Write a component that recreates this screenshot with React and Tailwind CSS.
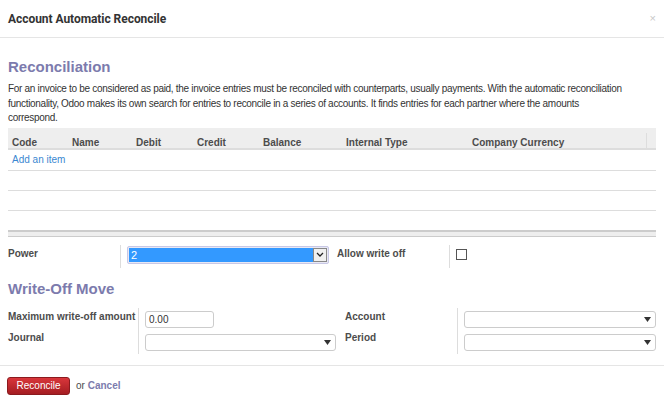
import React from "react";

const Caret = () => (
  <svg width="7" height="5" viewBox="0 0 7 5" className="shrink-0"><path d="M0 0h7L3.5 5z" fill="#333" /></svg>
);

const Sel = ({ className }) => (
  <div className={"h-[17px] border border-[#cccccc] rounded-[3px] bg-white flex items-center justify-end pr-[4px] " + className}>
    <Caret />
  </div>
);

export default function App() {
  return (
    <div className="w-[664px] h-[401px] bg-white font-['Liberation_Sans',Arial,sans-serif] text-[#4c4c4c] text-[11px] overflow-hidden">
      {/* header */}
      <div className="h-[38px] border-b border-[#e5e5e5] flex items-center justify-between pl-[8px] pr-[8px]">
        <div className="font-['Roboto',sans-serif] font-bold text-[12px] text-[#333] tracking-[-0.05px]">Account Automatic Reconcile</div>
        <div className="text-[#c8c8c8] text-[11px]">×</div>
      </div>
      <div className="px-[8px]">
        <div className="h-[20px] mt-[19px] flex items-center text-[15px] font-bold text-[#7c7bad]">Reconciliation</div>
        <p className="mt-[5px] text-[10px] leading-[14.5px] tracking-[-0.3px] text-[#333] whitespace-nowrap">
          For an invoice to be considered as paid, the invoice entries must be reconciled with counterparts, usually payments. With the automatic reconciliation<br />
          functionality, Odoo makes its own search for entries to reconcile in a series of accounts. It finds entries for each partner where the amounts<br />
          correspond.
        </p>
        {/* table */}
        <div className="mt-[2px] w-[648px]">
          <div className="h-[22px] bg-[#eeeeee] border-b-2 border-[#dddddd] font-bold text-[#4c4c4c] text-[10px] relative">
            <span className="absolute top-[7px] left-[4px]">Code</span>
            <span className="absolute top-[7px] left-[64px]">Name</span>
            <span className="absolute top-[7px] left-[128px]">Debit</span>
            <span className="absolute top-[7px] left-[189px]">Credit</span>
            <span className="absolute top-[7px] left-[255px]">Balance</span>
            <span className="absolute top-[7px] left-[338px]">Internal Type</span>
            <span className="absolute top-[7px] left-[464px]">Company Currency</span>
            <span className="absolute left-[638px] top-[5px] h-[15px] w-px bg-[#dddddd]" />
          </div>
          <div className="h-[21px] border-b border-[#dddddd] flex items-center pl-[4px] text-[#3a87d1] text-[10px]">Add an item</div>
          <div className="h-[20px] border-b border-[#dddddd]" />
          <div className="h-[20px] border-b border-[#dddddd]" />
          <div className="h-[21px] border-b-2 border-[#cccccc]" />
          <div className="h-[5px] bg-[#eeeeee] border-b border-[#cccccc]" />
        </div>
        {/* power row */}
        <div className="mt-[8px] flex items-start h-[23px]">
          <div className="w-[112px] h-[18px] flex items-center font-bold text-[10px]">Power</div>
          <div className="w-px h-[23px] bg-[#dddddd]" />
          <div className="ml-[6px] w-[202px] h-[18px] mt-[1px] border border-[#c8c8e6] rounded-[2px] bg-[#e8e8f4] p-[1px] flex">
            <div className="flex-1 bg-[#3399ff] text-white text-[11px] leading-[14px] pl-[2px]">2</div>
            <div className="w-[14px] h-[14px] border border-[#888] bg-[#f0f0f0] flex items-center justify-center">
              <svg width="8" height="5" viewBox="0 0 8 5"><path d="M1 1l3 3 3-3" stroke="#222" strokeWidth="1.3" fill="none" /></svg>
            </div>
          </div>
          <div className="ml-[8px] w-[112px] h-[18px] flex items-center font-bold text-[10px]">Allow write off</div>
          <div className="w-px h-[23px] bg-[#dddddd]" />
          <div className="ml-[6px] mt-[4px] w-[11px] h-[11px] border border-[#555] bg-white" />
        </div>
        <div className="mt-[12px] h-[20px] flex items-center text-[15px] font-bold text-[#7c7bad]">Write-Off Move</div>
        {/* write-off grid */}
        <div className="mt-[8px] flex">
          <div className="flex">
            <div className="w-[130px] flex flex-col gap-[3px] font-bold text-[10px] whitespace-nowrap">
              <div className="h-[18px] flex items-center">Maximum write-off amount</div>
              <div className="h-[18px] flex items-center">Journal</div>
            </div>
            <div className="w-px h-[46px] bg-[#dddddd]" />
            <div className="ml-[6px] flex flex-col gap-[6px] pt-[3px] w-[191px]">
              <div className="w-[69px] h-[17px] border border-[#cccccc] rounded-[3px] bg-white flex items-center pl-[3px] text-[10px] text-[#333]">0.00</div>
              <Sel className="w-[191px]" />
            </div>
          </div>
          <div className="ml-[9px] flex">
            <div className="w-[112px] flex flex-col gap-[3px] font-bold text-[10px]">
              <div className="h-[18px] flex items-center">Account</div>
              <div className="h-[18px] flex items-center">Period</div>
            </div>
            <div className="w-px h-[46px] bg-[#dddddd]" />
            <div className="ml-[6px] flex flex-col gap-[6px] pt-[3px]">
              <Sel className="w-[192px]" />
              <Sel className="w-[192px]" />
            </div>
          </div>
        </div>
      </div>
      {/* footer */}
      <div className="mt-[11px] border-t border-[#e5e5e5] pt-[11px] px-[7px] flex items-center gap-[6px]">
        <div className="w-[63px] h-[18px] rounded-[3px] bg-gradient-to-b from-[#d9363b] to-[#a51d22] border border-[#8b1a1e] text-white text-[10px] flex items-center justify-center">Reconcile</div>
        <span className="text-[10px]">or <span className="font-bold text-[#7c7bad]">Cancel</span></span>
      </div>
    </div>
  );
}
